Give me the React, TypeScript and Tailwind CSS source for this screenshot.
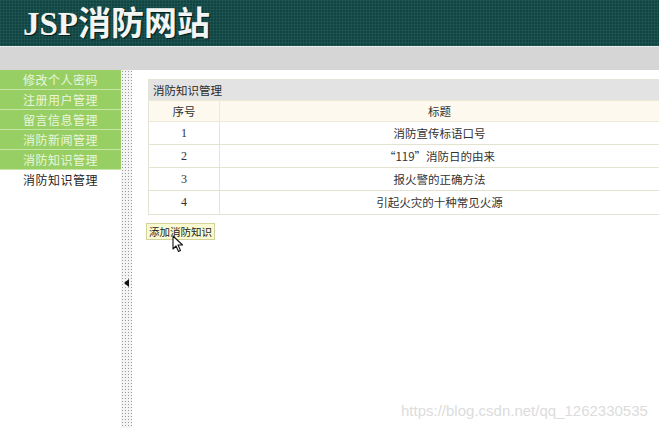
import React from 'react';

const menu = ['修改个人密码', '注册用户管理', '留言信息管理', '消防新闻管理', '消防知识管理'];

const rows = [
  { id: '1', title: '消防宣传标语口号' },
  { id: '2', title: '“119”消防日的由来' },
  { id: '3', title: '报火警的正确方法' },
  { id: '4', title: '引起火灾的十种常见火源' },
];

const cjk = "font-['Noto_Sans_CJK_SC',sans-serif]";

export default function App() {
  return (
    <div className="relative w-[672px] h-[428px] overflow-hidden bg-white">
      <div className="w-[659px] h-[428px] flex flex-col">
        {/* header */}
        <div className="h-[46px] shrink-0 bg-[#0f4643] bg-[image:repeating-linear-gradient(90deg,rgba(255,255,255,0.05)_0_1px,transparent_1px_3px),repeating-linear-gradient(0deg,rgba(255,255,255,0.05)_0_1px,transparent_1px_3px)] pl-[23px] flex items-center">
          <h1 className="text-[33px] leading-none font-bold text-[#f2f5f4] font-['Liberation_Serif','Noto_Sans_CJK_SC',serif] [text-shadow:1px_1px_1px_#021a18] mt-[2px]">
            JSP消防网站
          </h1>
        </div>
        <div className="h-px shrink-0 bg-[#e8eeec]" />
        <div className="h-[23px] shrink-0 bg-[#d6d6d6]" />

        {/* body */}
        <div className="flex flex-1 min-h-0">
          <div className={`w-[121px] shrink-0 ${cjk}`}>
            {menu.map((m) => (
              <div
                key={m}
                className="h-[20px] bg-[#98cf65] border-b border-[#c7e6a6] text-[#eaf6dc] text-[12px] leading-[19px] tracking-[0.5px] text-center"
              >
                {m}
              </div>
            ))}
            <div className="h-[20px] text-[#1f1f1f] text-[12px] leading-[20px] tracking-[0.5px] text-center">消防知识管理</div>
          </div>

          {/* splitter */}
          <div className="w-[11px] shrink-0 bg-[#f4f4f4] bg-[image:radial-gradient(circle,#9a9a9a_0.7px,transparent_1px)] bg-[length:3px_3px] flex flex-col items-center">
            <div className="mt-[209px] w-0 h-0 border-y-[4px] border-y-transparent border-r-[5px] border-r-[#111]" />
          </div>

          {/* content */}
          <div className={`flex-1 pl-[16px] pt-[9px] ${cjk}`}>
            <div className="border border-[#e4e4d6] border-r-0">
              <div className="h-[20px] bg-[#e3e3e3] text-[11.5px] leading-[20px] text-[#2a2a2a] pl-[4px]">消防知识管理</div>
              <div className="flex h-[22px] bg-[#fdf9ee] border-y border-[#ecead6] text-[11.5px] leading-[20px] text-[#333]">
                <div className="w-[71px] text-center border-r border-[#ecead6]">序号</div>
                <div className="flex-1 text-center">标题</div>
              </div>
              {rows.map((r, i) => (
                <div
                  key={r.id}
                  className={`flex h-[23px] text-[11.5px] leading-[22px] text-[#333] ${i < rows.length - 1 ? 'border-b border-[#e3e3cf]' : ''}`}
                >
                  <div className="w-[71px] text-center border-r border-[#e6e6d6] font-['Liberation_Serif',serif] text-[12px]">{r.id}</div>
                  <div className="flex-1 text-center">{r.title}</div>
                </div>
              ))}
            </div>
            <button className="mt-[8px] -ml-[2px] h-[17px] px-[2px] bg-[#fafad2] border border-[#d2d29c] text-[10.5px] leading-[15px] text-[#222]">
              添加消防知识
            </button>
          </div>
        </div>
      </div>

      {/* mouse cursor */}
      <svg className="absolute left-[172px] top-[235px]" width="13" height="18" viewBox="0 0 13 18">
        <path d="M1 1 L1 14 L4 11 L6.5 16.5 L8.5 15.5 L6 10 L10.5 10 Z" fill="#fff" stroke="#111" strokeWidth="1.1" strokeLinejoin="round" />
      </svg>

      {/* watermark */}
      <div className="absolute left-[401px] top-[402px] text-[15px] leading-[18px] text-[#dcdcdc] font-['Liberation_Sans',sans-serif] whitespace-nowrap">
        https://blog.csdn.net/qq_1262330535
      </div>
    </div>
  );
}
